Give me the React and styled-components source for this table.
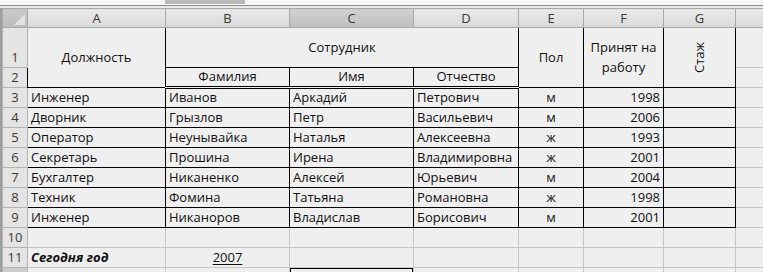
import React from "react";
import styled, { createGlobalStyle, css } from "styled-components";

const GlobalStyle = createGlobalStyle`
  html, body {
    margin: 0;
    padding: 0;
    background: #efefef;
    overflow: hidden;
  }
  body {
    font-family: "Open Sans", "Liberation Sans", Arial, sans-serif;
  }
`;

const Window = styled.div`
  width: 763px;
  height: 272px;
  overflow: hidden;
  background: #efefef;
  display: flex;
  flex-direction: column;
`;

const FormulaEdge = styled.div`
  height: 5px;
  flex: none;
  background: #f7f7f7;
  border-bottom: 1px solid #8e8e8e;
  display: flex;
  padding-left: 165px;
`;

const ScrollThumb = styled.div`
  width: 80px;
  height: 4px;
  background: #b9b9b9;
`;

const Gap = styled.div`
  height: 2px;
  flex: none;
  background: #e9e9e9;
`;

const SheetArea = styled.div`
  flex: 1;
  border-left: 2px solid #9f9f9f;
  overflow: hidden;
`;

const Grid = styled.table`
  border-collapse: collapse;
  table-layout: fixed;
  width: 773px;
  font-size: 13px;
  color: #111;
`;

const headerFace = css`
  height: 18px;
  padding: 0;
  text-align: center;
  vertical-align: middle;
  font-size: 13px;
  line-height: 17px;
  color: #3a3a3a;
  border: 1px solid #a9a9a9;
`;

const Corner = styled.th`
  ${headerFace};
  position: relative;
  background: linear-gradient(#c9c9c9, #bdbdbd);
`;

const CornerMark = styled.svg`
  position: absolute;
  right: 2px;
  bottom: 2px;
`;

const ColHead = styled.th`
  ${headerFace};
  font-weight: normal;
  background: ${(p) =>
    p.$active
      ? "linear-gradient(#d2d2d2, #bebebe)"
      : "linear-gradient(#eaeaea, #d9d9d9)"};
`;

const RowHead = styled.th`
  padding: 0 0 1px;
  font-weight: normal;
  font-size: 13px;
  line-height: 17px;
  color: #3a3a3a;
  text-align: center;
  vertical-align: bottom;
  background: ${(p) => (p.$active ? "#cdcdcd" : "#e4e4e4")};
  border: 1px solid #b3b3b3;
`;

const Row = styled.tr`
  height: ${(p) => p.$h}px;
`;

const Cell = styled.td`
  position: relative;
  padding: 0 3px 1px;
  border: 1px solid ${(p) => (p.$ruled ? "#000" : "#c5c5c5")};
  text-align: ${(p) => p.$align || "left"};
  vertical-align: ${(p) => p.$valign || "bottom"};
  white-space: ${(p) => (p.$wrap ? "normal" : "nowrap")};
  line-height: ${(p) => (p.$wrap ? "20px" : "17px")};
  overflow: hidden;
  ${(p) => p.$double && "border-bottom: 3px double #000;"}
  ${(p) => p.$strong && "font-weight: bold; font-style: italic;"}
`;

/* box filling the merged header cell; its caption is turned to read upward */
const RotatedBox = styled.div`
  height: 58px;
  display: flex;
  align-items: center;
  justify-content: center;
  padding-top: 0;
`;

const Upward = styled.span`
  display: inline-block;
  transform: rotate(-90deg);
  line-height: 17px;
`;

const Underlined = styled.span`
  text-decoration: underline;
  text-underline-offset: 2px;
`;

const Selection = styled.div`
  position: absolute;
  inset: -2px -2px -2px -2px;
  border: 3px solid #000;
  pointer-events: none;
`;

const columns = ["A", "B", "C", "D", "E", "F", "G", ""];
const widths = [25, 138, 124, 124, 105, 65, 80, 72, 40];

const staff = [
  ["Инженер", "Иванов", "Аркадий", "Петрович", "м", "1998"],
  ["Дворник", "Грызлов", "Петр", "Васильевич", "м", "2006"],
  ["Оператор", "Неунывайка", "Наталья", "Алексеевна", "ж", "1993"],
  ["Секретарь", "Прошина", "Ирена", "Владимировна", "ж", "2001"],
  ["Бухгалтер", "Никаненко", "Алексей", "Юрьевич", "м", "2004"],
  ["Техник", "Фомина", "Татьяна", "Романовна", "ж", "1998"],
  ["Инженер", "Никаноров", "Владислав", "Борисович", "м", "2001"],
];

export default function App() {
  return (
    <>
      <GlobalStyle />
      <Window>
        <FormulaEdge>
          <ScrollThumb />
        </FormulaEdge>
        <Gap />
        <SheetArea>
          <Grid>
            <colgroup>
              {widths.map((w, i) => (
                <col key={i} style={{ width: w }} />
              ))}
            </colgroup>
            <thead>
              <tr>
                <Corner>
                  <CornerMark width="11" height="11" viewBox="0 0 11 11">
                    <polygon points="11,0 11,11 0,11" fill="#e2e2e2" />
                  </CornerMark>
                </Corner>
                {columns.map((c, i) => (
                  <ColHead key={i} $active={c === "C"}>
                    {c}
                  </ColHead>
                ))}
              </tr>
            </thead>
            <tbody>
              <Row $h={40}>
                <RowHead>1</RowHead>
                <Cell $ruled rowSpan={2} $align="center" $valign="middle">
                  Должность
                </Cell>
                <Cell $ruled colSpan={3} $align="center" $valign="middle">
                  Сотрудник
                </Cell>
                <Cell $ruled rowSpan={2} $align="center" $valign="middle">
                  Пол
                </Cell>
                <Cell $ruled rowSpan={2} $align="center" $valign="middle" $wrap>
                  Принят на работу
                </Cell>
                <Cell $ruled rowSpan={2} $valign="middle">
                  <RotatedBox>
                    <Upward>Стаж</Upward>
                  </RotatedBox>
                </Cell>
                <Cell />
              </Row>
              <Row $h={19}>
                <RowHead>2</RowHead>
                <Cell $ruled $double $align="center">
                  Фамилия
                </Cell>
                <Cell $ruled $double $align="center">
                  Имя
                </Cell>
                <Cell $ruled $double $align="center">
                  Отчество
                </Cell>
                <Cell />
              </Row>
              {staff.map((r, i) => (
                <Row $h={20} key={i}>
                  <RowHead>{i + 3}</RowHead>
                  <Cell $ruled>{r[0]}</Cell>
                  <Cell $ruled>{r[1]}</Cell>
                  <Cell $ruled>{r[2]}</Cell>
                  <Cell $ruled>{r[3]}</Cell>
                  <Cell $ruled $align="center">
                    {r[4]}
                  </Cell>
                  <Cell $ruled $align="right">
                    {r[5]}
                  </Cell>
                  <Cell $ruled />
                  <Cell />
                </Row>
              ))}
              <Row $h={20}>
                <RowHead>10</RowHead>
                {columns.map((_, i) => (
                  <Cell key={i} />
                ))}
              </Row>
              <Row $h={20}>
                <RowHead>11</RowHead>
                <Cell $strong>Сегодня год</Cell>
                <Cell $align="center">
                  <Underlined>2007</Underlined>
                </Cell>
                {columns.slice(2).map((_, i) => (
                  <Cell key={i} />
                ))}
              </Row>
              <Row $h={20}>
                <RowHead $active>12</RowHead>
                <Cell />
                <Cell />
                <Cell>
                  <Selection />
                </Cell>
                {columns.slice(3).map((_, i) => (
                  <Cell key={i} />
                ))}
              </Row>
            </tbody>
          </Grid>
        </SheetArea>
      </Window>
    </>
  );
}
